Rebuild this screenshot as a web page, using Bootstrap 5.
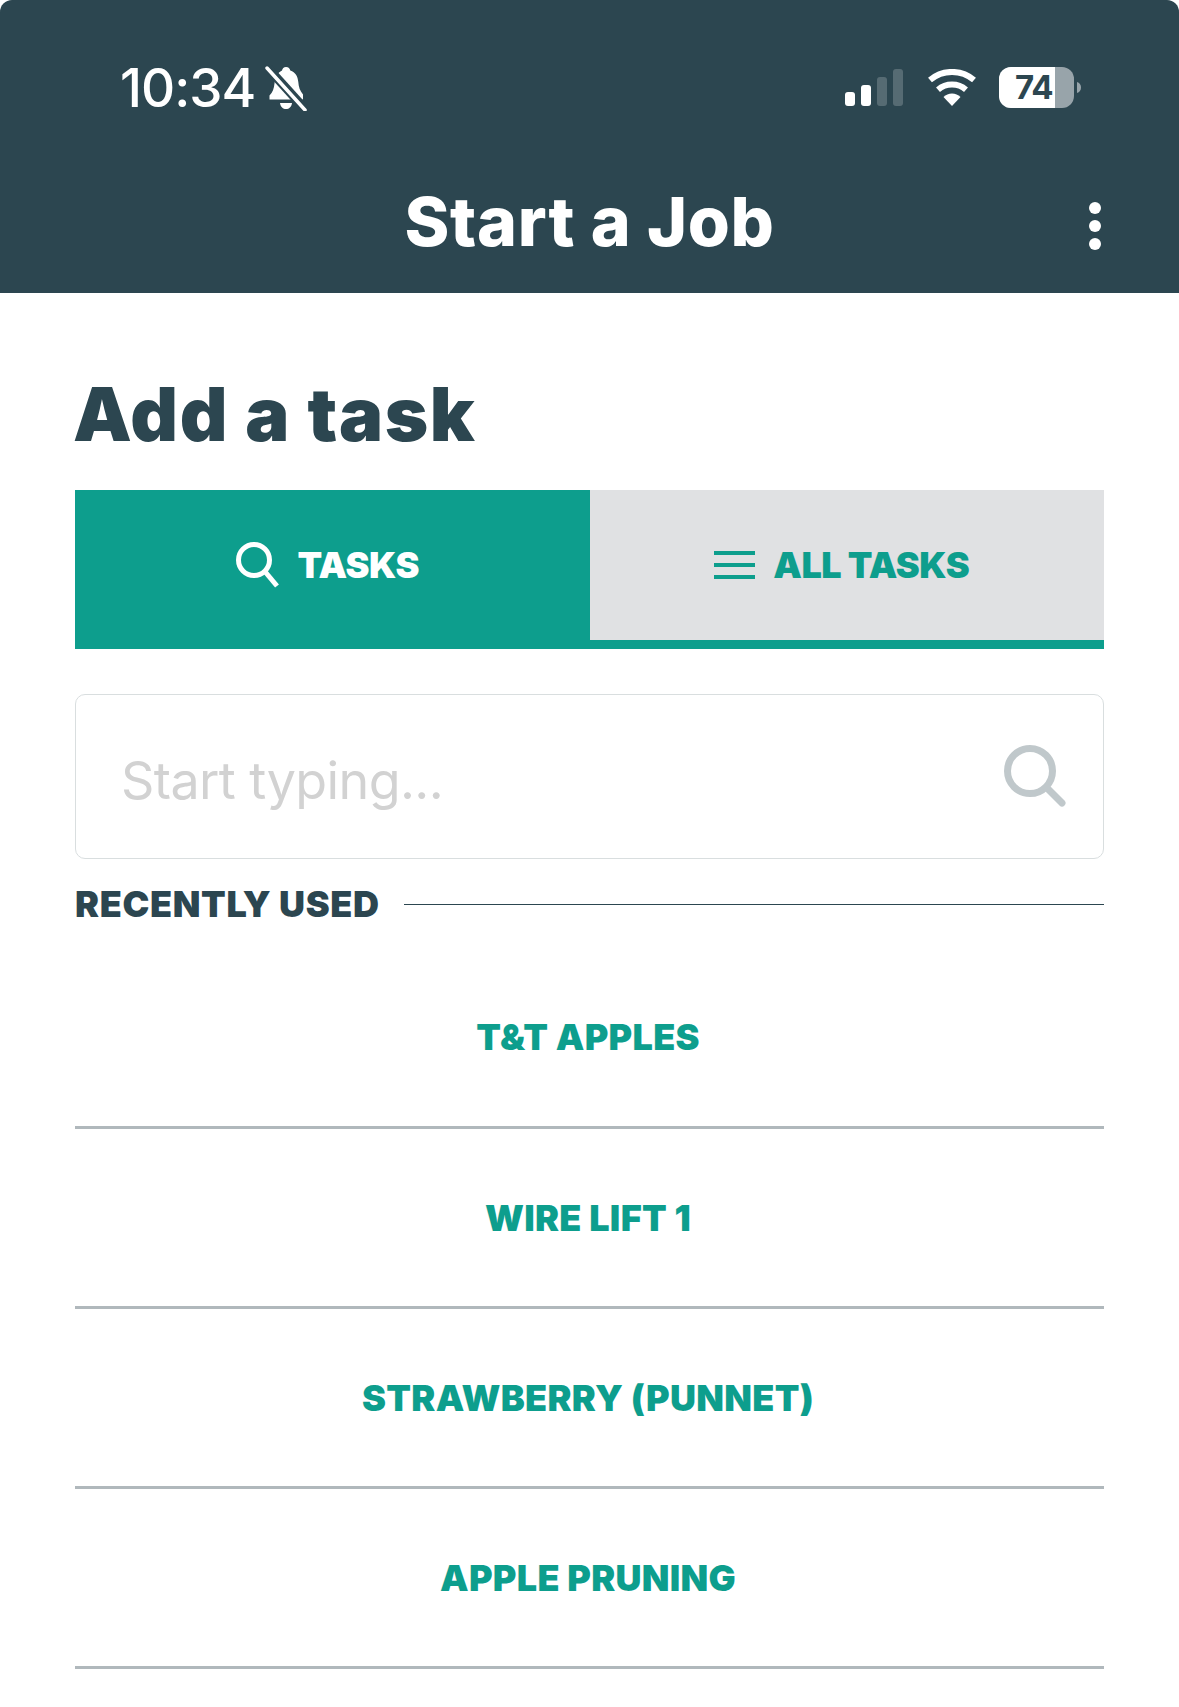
<!DOCTYPE html>
<html lang="en">
  <head>
    <meta charset="UTF-8" />
    <meta name="viewport" content="width=device-width, initial-scale=1.0" />
    <title>Start a Job</title>
    <link
      href="https://cdn.jsdelivr.net/npm/bootstrap@5.3.0/dist/css/bootstrap.min.css"
      rel="stylesheet"
    />
    <style>
      body { background: #fff; font-family: Inter, sans-serif; color: #2c4650; }
      .app-head { background: #2c4650; height: 293px; border-radius: 12px 12px 0 0; color: #fff; }
      .status-row { height: 181px; padding: 62px 98px 0 120px; }
      .status-time { font-family: Inter, sans-serif; font-size: 53px; line-height: 52px; font-weight: 500; letter-spacing: -1px; }
      .bell-icon { margin-left: 10px; }
      .signal-group { margin-top: 5px; }
      .batt-wrap { position: relative; width: 82px; height: 41px; margin-left: 22px; }
      .batt-num { position: absolute; left: 16px; top: 0; width: 40px; overflow: hidden; font-size: 33px; line-height: 41px; font-weight: 700; color: #2c4650; letter-spacing: -1px; white-space: nowrap; }
      .title-row { padding: 0 78px; }
      .title-gap { width: 12px; }
      .job-title { font-family: Inter, sans-serif; font-size: 68px; font-weight: 800; line-height: 80px; letter-spacing: 0.7px; margin: 0; color: #fff; }
      .kebab { gap: 6px; padding-top: 9px; }
      .kebab span { width: 12px; height: 12px; border-radius: 50%; background: #fff; display: block; }
      .page-body { padding: 76px 75px 0; }
      .task-head { font-size: 74px; font-weight: 900; line-height: 90px; letter-spacing: 1.6px; margin: 0 0 31px -2px; color: #2c4650; }
      .tab-strip { height: 159px; }
      .tab-item { height: 159px; font-size: 36px; font-weight: 900; letter-spacing: -0.5px; text-decoration: none; gap: 18px; padding-right: 10px; }
      .tab-on { background: #0d9e8d; color: #fff; padding-bottom: 9px; }
      .tab-off { background: #e0e1e3; color: #0d9e8d; border-bottom: 9px solid #0d9e8d; }
      .tab-item:hover { color: inherit; }
      .search-box { margin-top: 45px; }
      .search-box .form-control { height: 165px; border: 1.5px solid #d9dedf; border-radius: 10px; padding: 8px 120px 0 45px; font-family: Inter, sans-serif; font-size: 52px; font-weight: 400; letter-spacing: -0.6px; }
      .search-box .form-control::placeholder { color: #d2d2d2; opacity: 1; }
      .search-glass { position: absolute; right: 38px; top: 51px; }
      .recent-row { height: 90px; gap: 24px; }
      .recent-label { font-size: 36px; font-weight: 900; letter-spacing: 0.65px; line-height: 1; white-space: nowrap; }
      .recent-line { flex: 1; height: 1px; background: #2c4650; }
      .task-list { margin-top: -4px; --bs-list-group-border-width: 3px; --bs-list-group-border-color: #b0b8bc; }
      .task-list > .task-row { height: 180px; padding: 0 3px 0 0; font-size: 36px; font-weight: 900; letter-spacing: 0.3px; color: #0d9e8d; background: transparent; text-align: center; line-height: 178px; }
      .task-list > .task-row:first-child { height: 184px; line-height: 185px; }
      .task-list > .task-row:last-child { border-bottom-width: 3px; }
    </style>
  </head>
  <body>
    <header class="app-head">
      <div class="status-row d-flex align-items-start justify-content-between">
        <div class="d-flex align-items-center">
          <span class="status-time">10:34</span>
          <svg class="bell-icon" width="42" height="46" viewBox="0 0 42 46" fill="#fff">
            <path d="M21 2c2.500 0 4 1.500 4.300 3.600 5.200 1.600 7.500 6 8 11.500.4 5 1.500 8.500 4.700 12.500v5H4.500v-4c3.200-3 4.500-7 5-12 .6-6 3-11 7.500-13C17.300 3.600 18.700 2 21 2z"/>
            <path d="M15 38h12c-.6 4-3 6-6 6s-5.400-2-6-6z"/>
            <path d="M2 2l38 42" stroke="#2c4650" stroke-width="9" fill="none"/>
            <path d="M2 3l38 42" stroke="#fff" stroke-width="3.500" stroke-linecap="round" fill="none"/>
          </svg>
        </div>
        <div class="signal-group d-flex align-items-center">
          <svg width="58" height="37" viewBox="0 0 58 37" fill="#fff" class="me-4">
            <rect x="0" y="23" width="10" height="14" rx="3"/>
            <rect x="16" y="16" width="10" height="21" rx="3"/>
            <rect x="32" y="8" width="10" height="29" rx="3" fill-opacity=".2"/>
            <rect x="48" y="0" width="10" height="37" rx="3" fill-opacity=".2"/>
          </svg>
          <svg width="50" height="37" viewBox="0 0 50 37" fill="none" stroke="#fff" stroke-width="6">
            <path d="M3 11A34 34 0 0 1 47 11"/>
            <path d="M11 20.700A21.500 21.500 0 0 1 39 20.700"/>
            <path d="M25 37L16.500 28A12 12 0 0 1 33.500 28Z" fill="#fff" stroke="none"/>
          </svg>
          <div class="batt-wrap">
            <svg width="82" height="41" viewBox="0 0 82 41">
              <rect x="0" y="0" width="75" height="41" rx="12" fill="#98a4aa"/>
              <path d="M12 0H56V41H12A12 12 0 0 1 0 29V12A12 12 0 0 1 12 0Z" fill="#fff"/>
              <path d="M78 15c2.500.8 4 2.500 4 5.500s-1.500 4.700-4 5.500z" fill="#98a4aa"/>
            </svg>
            <span class="batt-num">74</span>
          </div>
        </div>
      </div>
      <div class="title-row d-flex align-items-center justify-content-between">
        <span class="title-gap"></span>
        <h1 class="job-title">Start a Job</h1>
        <div class="kebab d-flex flex-column"><span></span><span></span><span></span></div>
      </div>
    </header>

    <main class="page-body">
      <h2 class="task-head">Add a task</h2>

      <div class="row g-0 tab-strip">
        <div class="col-6">
          <a href="#" class="tab-item tab-on d-flex align-items-center justify-content-center">
            <svg width="44" height="46" viewBox="0 0 44 46" fill="none" stroke="#fff" stroke-width="5">
              <circle cx="18" cy="18" r="15.500"/>
              <path d="M28.500 29L41 44"/>
            </svg>
            TASKS
          </a>
        </div>
        <div class="col-6">
          <a href="#" class="tab-item tab-off d-flex align-items-center justify-content-center">
            <svg width="41" height="28" viewBox="0 0 41 28" fill="#0d9e8d">
              <rect width="41" height="4"/><rect y="12" width="41" height="4"/><rect y="24" width="41" height="4"/>
            </svg>
            ALL TASKS
          </a>
        </div>
      </div>

      <div class="search-box position-relative">
        <input type="text" class="form-control" placeholder="Start typing..." aria-label="Start typing" />
        <svg class="search-glass" width="62" height="62" viewBox="0 0 62 62" fill="none" stroke="#c0c8cb" stroke-width="7" stroke-linecap="round">
          <circle cx="26" cy="26" r="22.500"/>
          <path d="M43 43L58 58"/>
        </svg>
      </div>

      <div class="recent-row d-flex align-items-center">
        <span class="recent-label">RECENTLY USED</span>
        <span class="recent-line"></span>
      </div>

      <div class="list-group list-group-flush task-list">
        <div class="list-group-item task-row">T&amp;T APPLES</div>
        <div class="list-group-item task-row">WIRE LIFT 1</div>
        <div class="list-group-item task-row">STRAWBERRY (PUNNET)</div>
        <div class="list-group-item task-row">APPLE PRUNING</div>
      </div>
    </main>
    <script src="https://cdn.jsdelivr.net/npm/bootstrap@5.3.0/dist/js/bootstrap.bundle.min.js"></script>
  </body>
</html>
